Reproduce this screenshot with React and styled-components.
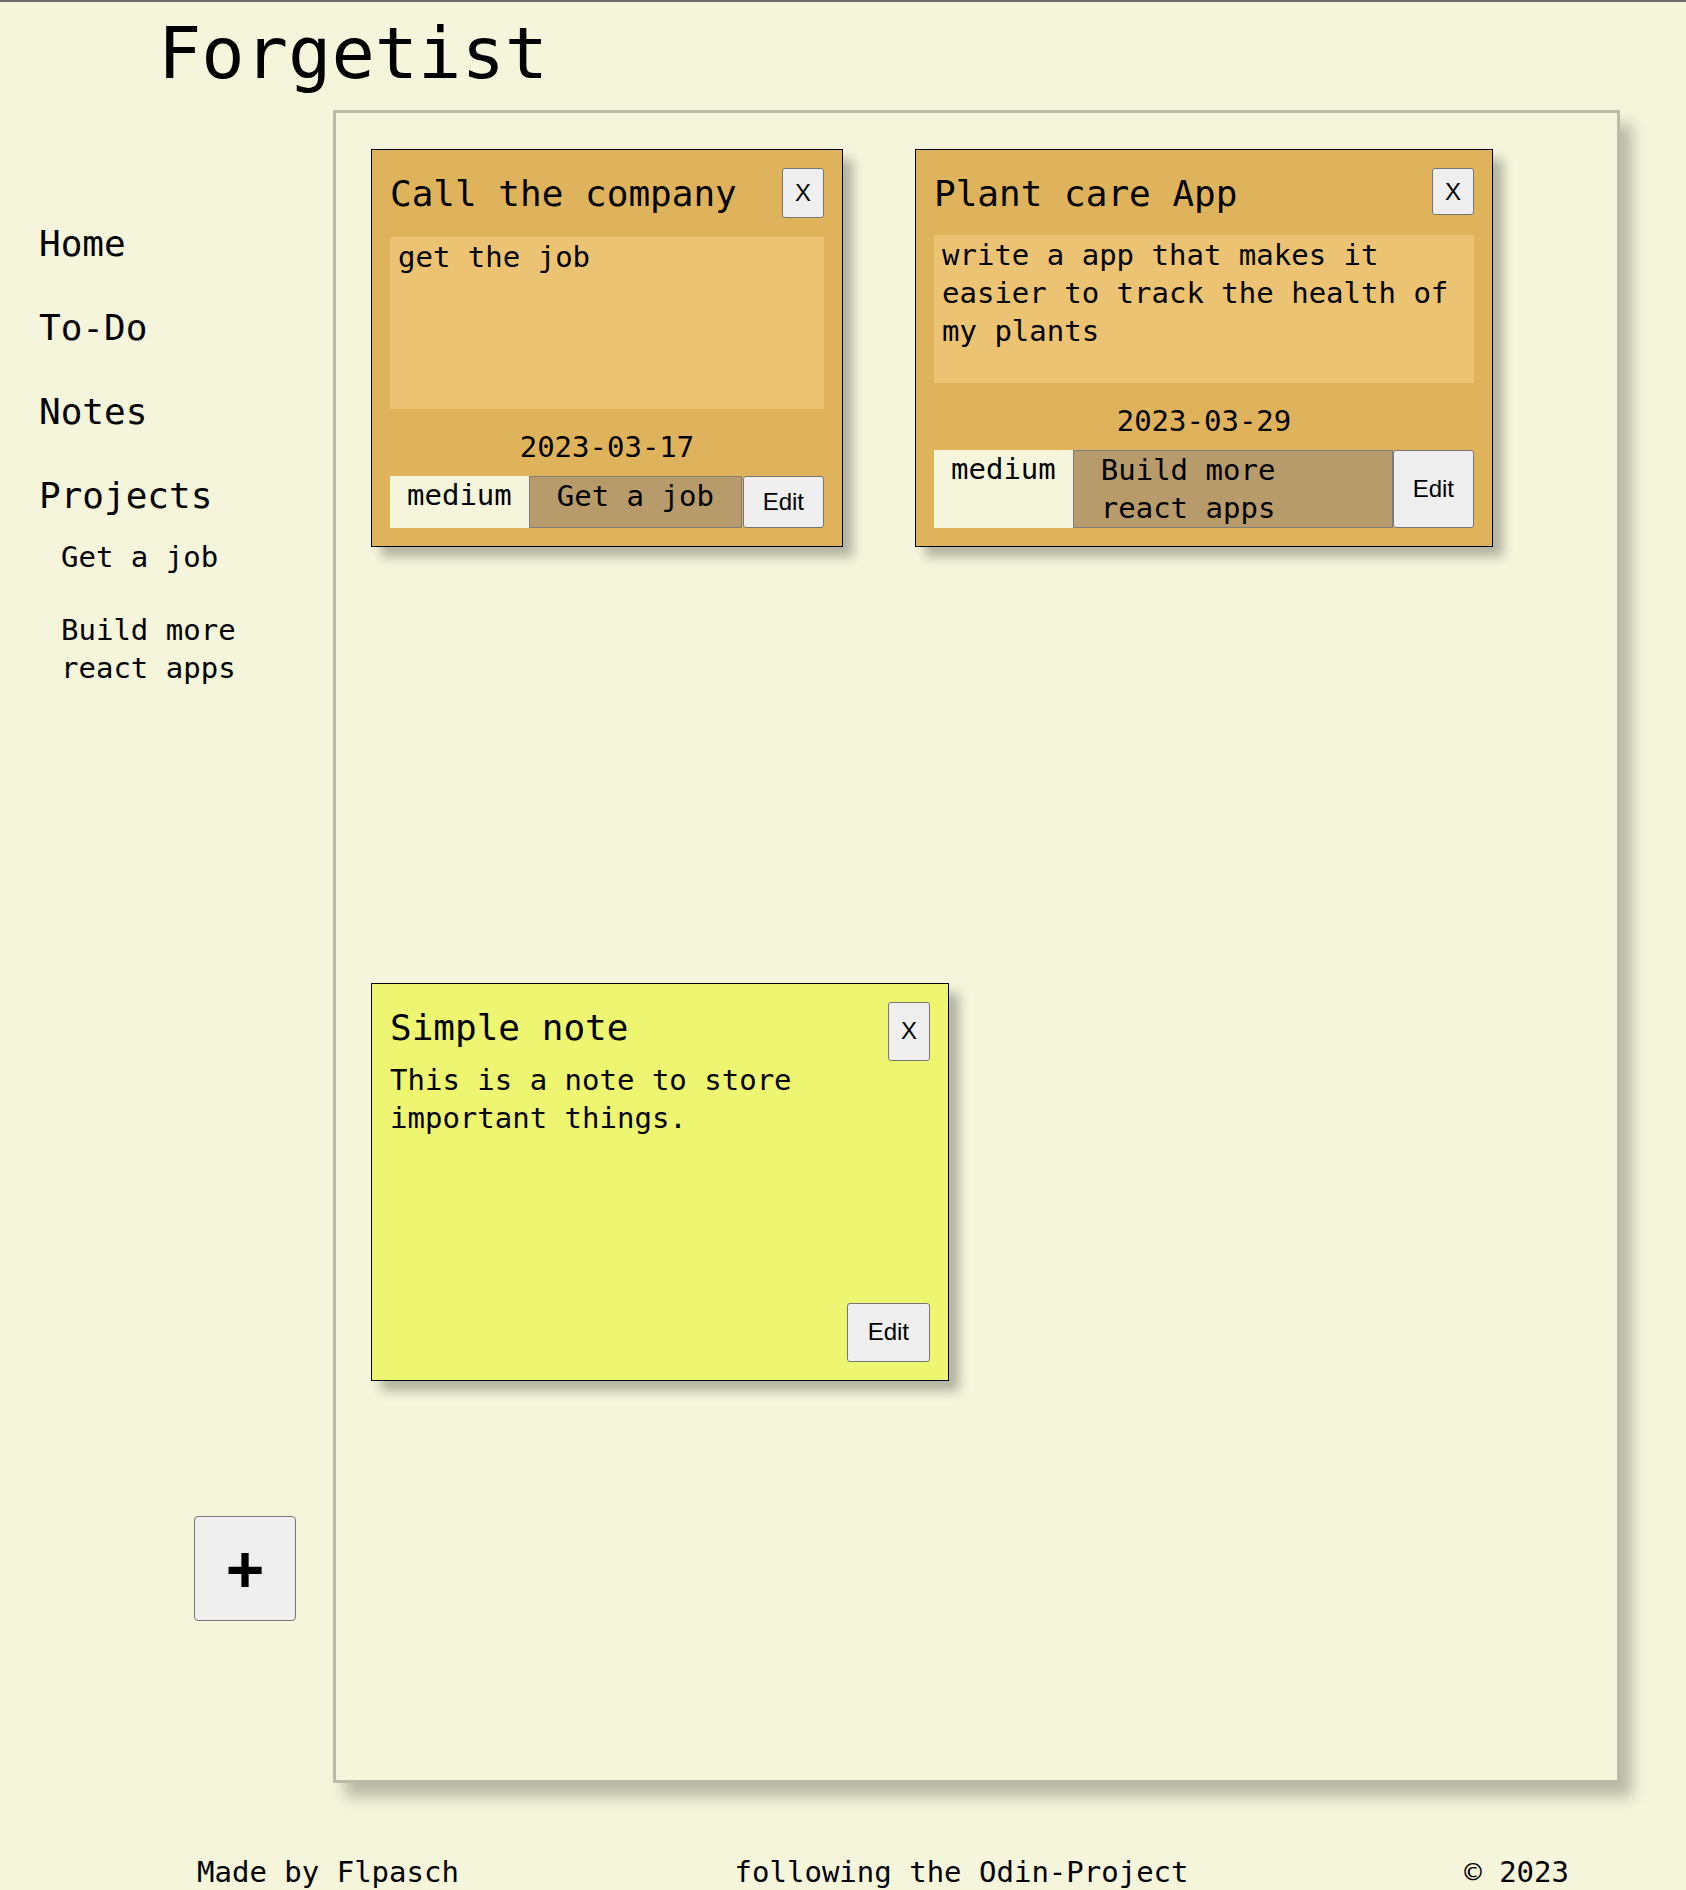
import styled, { createGlobalStyle } from "styled-components";

const GlobalStyle = createGlobalStyle`
  * {
    box-sizing: border-box;
  }

  html,
  body {
    margin: 0;
    padding: 0;
  }

  body {
    background: #f5f5dc;
    border-top: 2px solid #6b6b6b;
    color: #000;
    font-family: "DejaVu Sans Mono", "Liberation Mono", monospace;
  }
`;

const Page = styled.div`
  width: 1686px;
`;

const Header = styled.header`
  padding: 9px 0 0 158px;
  margin-bottom: 15px;
`;

const Logo = styled.h1`
  margin: 0;
  font-size: 72px;
  line-height: 84px;
  font-weight: 400;
`;

const Layout = styled.div`
  display: grid;
  grid-template-columns: 333px 1287px;
  height: 1673px;
`;

const Sidebar = styled.nav`
  display: flex;
  flex-direction: column;
  padding: 112px 40px 0 39px;
`;

const NavItem = styled.div`
  font-size: 36px;
  line-height: 44px;

  & + & {
    margin-top: 40px;
  }
`;

const SubList = styled.div`
  display: flex;
  flex-direction: column;
  gap: 35px;
  margin-top: 20px;
  padding-left: 22px;
`;

const SubItem = styled.div`
  font-size: 29px;
  line-height: 38px;
`;

const AddButton = styled.button`
  align-self: flex-end;
  margin: auto -3px 162px 0;
  width: 102px;
  height: 105px;
  padding: 0;
  background: #efefef;
  border: 1px solid #767676;
  border-radius: 4px;
  color: #000;
  font-family: "Liberation Sans", Arial, sans-serif;
  font-size: 66px;
  font-weight: 700;
  line-height: 1;
`;

const Board = styled.main`
  display: grid;
  grid-template-rows: 1fr 1fr;
  border: 3px solid #b9baa8;
  box-shadow: 12px 14px 14px #b8b9a6;
`;

const Section = styled.section`
  display: flex;
  flex-wrap: wrap;
  align-items: flex-start;
  align-content: flex-start;
  gap: 72px;
  padding: 36px 35px;
`;

const Card = styled.article`
  display: flex;
  flex-direction: column;
  width: ${(p) => p.$width}px;
  height: 398px;
  padding: 18px;
  background: ${(p) => p.$bg};
  border: 1px solid #000;
  box-shadow: 10px 10px 10px #b3b4a1;
`;

const CardHeader = styled.div`
  display: flex;
  justify-content: space-between;
  align-items: flex-start;
  margin-bottom: ${(p) => p.$gap}px;
`;

const CardTitle = styled.h2`
  margin: 4px 0 0;
  font-size: 36px;
  line-height: 44px;
  font-weight: 400;
`;

const UiButton = styled.button`
  flex-shrink: 0;
  background: #efefef;
  border: 1px solid #767676;
  border-radius: 3px;
  color: #000;
  font-family: "Liberation Sans", Arial, sans-serif;
  font-size: 24px;
`;

const CloseButton = styled(UiButton)`
  height: ${(p) => p.$h}px;
  padding: 0 12px;
`;

const EditButton = styled(UiButton)`
  margin-left: auto;
  padding: 11px 19px;
`;

const NoteEdit = styled(UiButton)`
  align-self: flex-end;
  margin-top: auto;
  height: 59px;
  padding: 0 20px;
`;

const Description = styled.p`
  flex: 1;
  margin: 0;
  padding: 1px 8px;
  background: #ecc273;
  font-size: 29px;
  line-height: 38px;
`;

const DueDate = styled.div`
  margin: 19px 0 10px;
  text-align: center;
  font-size: 29px;
  line-height: 38px;
`;

const CardFooter = styled.div`
  display: flex;
`;

const Priority = styled.div`
  flex-shrink: 0;
  padding: 0 17px;
  background: #f5f5dc;
  font-size: 29px;
  line-height: 38px;
`;

const ProjectTag = styled.div`
  flex: 0 1 auto;
  min-width: 0;
  padding: 0 27px;
  background: #b89b6a;
  border: 1px solid #7d7d7d;
  font-size: 29px;
  line-height: 38px;
`;

const NoteText = styled.p`
  margin: 0;
  font-size: 29px;
  line-height: 38px;
`;

const Footer = styled.footer`
  display: flex;
  justify-content: space-between;
  margin-top: 70px;
  padding: 0 117px 0 197px;
  font-size: 29px;
  line-height: 38px;
`;

const todos = [
  {
    title: "Call the company",
    text: "get the job",
    date: "2023-03-17",
    priority: "medium",
    project: "Get a job",
    width: 472,
    closeH: 50,
  },
  {
    title: "Plant care App",
    text: "write a app that makes it easier to track the health of my plants",
    date: "2023-03-29",
    priority: "medium",
    project: "Build more react apps",
    width: 578,
    closeH: 47,
  },
];

const notes = [
  {
    title: "Simple note",
    text: "This is a note to store important things.",
  },
];

const App = () => {
  return (
    <Page>
      <GlobalStyle />
      <Header>
        <Logo>Forgetist</Logo>
      </Header>
      <Layout>
        <Sidebar>
          <NavItem>Home</NavItem>
          <NavItem>To-Do</NavItem>
          <NavItem>Notes</NavItem>
          <NavItem>Projects</NavItem>
          <SubList>
            <SubItem>Get a job</SubItem>
            <SubItem>Build more react apps</SubItem>
          </SubList>
          <AddButton>+</AddButton>
        </Sidebar>
        <Board>
          <Section>
            {todos.map((todo) => (
              <Card key={todo.title} $width={todo.width} $bg="#dfb25c">
                <CardHeader $gap={19}>
                  <CardTitle>{todo.title}</CardTitle>
                  <CloseButton $h={todo.closeH}>X</CloseButton>
                </CardHeader>
                <Description>{todo.text}</Description>
                <DueDate>{todo.date}</DueDate>
                <CardFooter>
                  <Priority>{todo.priority}</Priority>
                  <ProjectTag>{todo.project}</ProjectTag>
                  <EditButton>Edit</EditButton>
                </CardFooter>
              </Card>
            ))}
          </Section>
          <Section>
            {notes.map((note) => (
              <Card key={note.title} $width={578} $bg="#eef571">
                <CardHeader $gap={0}>
                  <CardTitle>{note.title}</CardTitle>
                  <CloseButton $h={59}>X</CloseButton>
                </CardHeader>
                <NoteText>{note.text}</NoteText>
                <NoteEdit>Edit</NoteEdit>
              </Card>
            ))}
          </Section>
        </Board>
      </Layout>
      <Footer>
        <span>Made by Flpasch</span>
        <span>following the Odin-Project</span>
        <span>© 2023</span>
      </Footer>
    </Page>
  );
};

export default App;
